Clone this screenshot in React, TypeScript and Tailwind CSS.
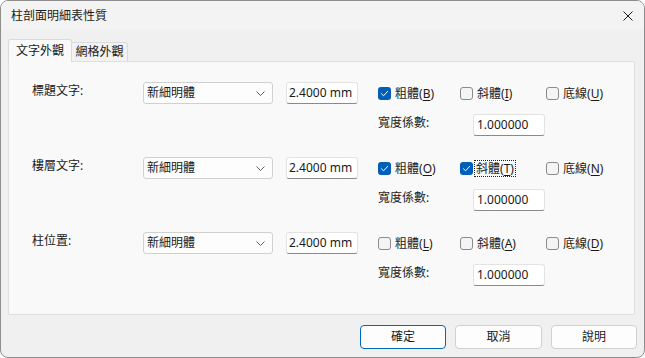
import { useState } from 'react';

type Style = { label: string; key: string; checked: boolean; focus?: boolean };
type Row = { label: string; styles: Style[] };

const rows: Row[] = [
  {
    label: '標題文字:',
    styles: [
      { label: '粗體', key: 'B', checked: true },
      { label: '斜體', key: 'I', checked: false },
      { label: '底線', key: 'U', checked: false },
    ],
  },
  {
    label: '樓層文字:',
    styles: [
      { label: '粗體', key: 'O', checked: true },
      { label: '斜體', key: 'T', checked: true, focus: true },
      { label: '底線', key: 'N', checked: false },
    ],
  },
  {
    label: '柱位置:',
    styles: [
      { label: '粗體', key: 'L', checked: false },
      { label: '斜體', key: 'A', checked: false },
      { label: '底線', key: 'D', checked: false },
    ],
  },
];

function CheckBox({ checked }: { checked: boolean }) {
  if (checked) {
    return (
      <div className="w-[13px] h-[13px] rounded-[3px] bg-[#005fb8] flex items-center justify-center shrink-0">
        <svg width="9" height="9" viewBox="0 0 9 9" fill="none">
          <path d="M1.5 4.8 L3.6 6.8 L7.6 2.4" stroke="white" strokeWidth="1" strokeLinecap="round" strokeLinejoin="round" />
        </svg>
      </div>
    );
  }
  return <div className="w-[13px] h-[13px] rounded-[3px] border border-[#8a8a8a] bg-[#f4f4f4] shrink-0" />;
}

function StyleCheck({ s, width }: { s: Style; width: string }) {
  return (
    <div className={`flex items-center gap-[2px] ${width}`}>
      <CheckBox checked={s.checked} />
      <span className={`px-[1px] leading-[15px] ${s.focus ? 'outline outline-1 outline-dotted outline-[#222]' : 'border border-transparent'}`}>
        {s.label}(<span className="underline underline-offset-2">{s.key}</span>)
      </span>
    </div>
  );
}

export default function App() {
  const [tab] = useState(0);

  return (
    <div
      className="w-[645px] h-[358px] bg-[#f0f0f0] border border-[#8e8e8e] rounded-[8px] overflow-hidden flex flex-col text-[12px] text-[#1a1a1a]"
      style={{ fontFamily: '"Noto Sans", "Noto Sans CJK TC", sans-serif' }}
    >
      {/* title bar */}
      <div className="h-[29px] bg-[#f3f3f3] flex items-center justify-between pl-[10px] pr-[11px]">
        <span className="text-[12px]">柱剖面明細表性質</span>
        <svg width="10" height="10" viewBox="0 0 10 10">
          <path d="M0.5 0.5 L9.5 9.5 M9.5 0.5 L0.5 9.5" stroke="#1a1a1a" strokeWidth="1" />
        </svg>
      </div>

      {/* tabs */}
      <div className="flex items-end pl-[7px] pt-[9px]">
        <div className={`h-[23px] w-[64px] flex items-center justify-center border border-b-0 border-[#dadada] rounded-t-[3px] -mb-px relative z-10 ${tab === 0 ? 'bg-[#f9f9f9]' : ''}`}>
          文字外觀
        </div>
        <div className="h-[19px] w-[56px] flex items-center justify-center border border-l-0 border-b-0 border-[#dadada] rounded-tr-[3px] bg-[#f2f2f2]">
          網格外觀
        </div>
      </div>

      {/* panel */}
      <div className="ml-[7px] w-[627px] h-[254px] bg-[#f9f9f9] border border-[#dfdfdf] rounded-[2px] pt-[20px]">
        {rows.map(r => (
          <div key={r.label} className="h-[75px] flex flex-col">
            <div className="flex items-start">
              <div className="pl-[23px] w-[134px] leading-[18px]">{r.label}</div>
              <div className="w-[130px] h-[22px] bg-[#fdfdfd] border border-[#d0d0d0] rounded-[3px] flex items-center justify-between pl-[3px] pr-[7px]">
                <span>新細明體</span>
                <svg width="9" height="5" viewBox="0 0 9 5">
                  <path d="M0.5 0.5 L4.5 4.5 L8.5 0.5" stroke="#606060" strokeWidth="1" fill="none" />
                </svg>
              </div>
              <div className="ml-[13px] w-[72px] h-[22px] bg-white border border-[#e3e3e3] border-b-[#8a8a8a] rounded-[3px] flex items-center pl-[2px]">
                2.4000 mm
              </div>
              <div className="ml-[20px] h-[22px] flex items-center">
                <StyleCheck s={r.styles[0]} width="w-[82px]" />
                <StyleCheck s={r.styles[1]} width="w-[86px]" />
                <StyleCheck s={r.styles[2]} width="w-[80px]" />
              </div>
            </div>
            <div className="flex items-start mt-[10px] pl-[369px]">
              <div className="w-[95px] leading-[18px]">寬度係數:</div>
              <div className="w-[72px] h-[22px] bg-white border border-[#e3e3e3] border-b-[#8a8a8a] rounded-[3px] flex items-center pl-[3px]">
                1.000000
              </div>
            </div>
          </div>
        ))}
      </div>

      {/* buttons */}
      <div className="flex justify-end gap-[9px] pr-[7px] mt-[10px]">
        <button className="w-[86px] h-[24px] bg-[#fdfdfd] border border-[#0067c0] rounded-[4px]">確定</button>
        <button className="w-[87px] h-[24px] bg-[#fdfdfd] border border-[#d0d0d0] rounded-[4px]">取消</button>
        <button className="w-[86px] h-[24px] bg-[#fdfdfd] border border-[#d0d0d0] rounded-[4px]">說明</button>
      </div>
    </div>
  );
}
